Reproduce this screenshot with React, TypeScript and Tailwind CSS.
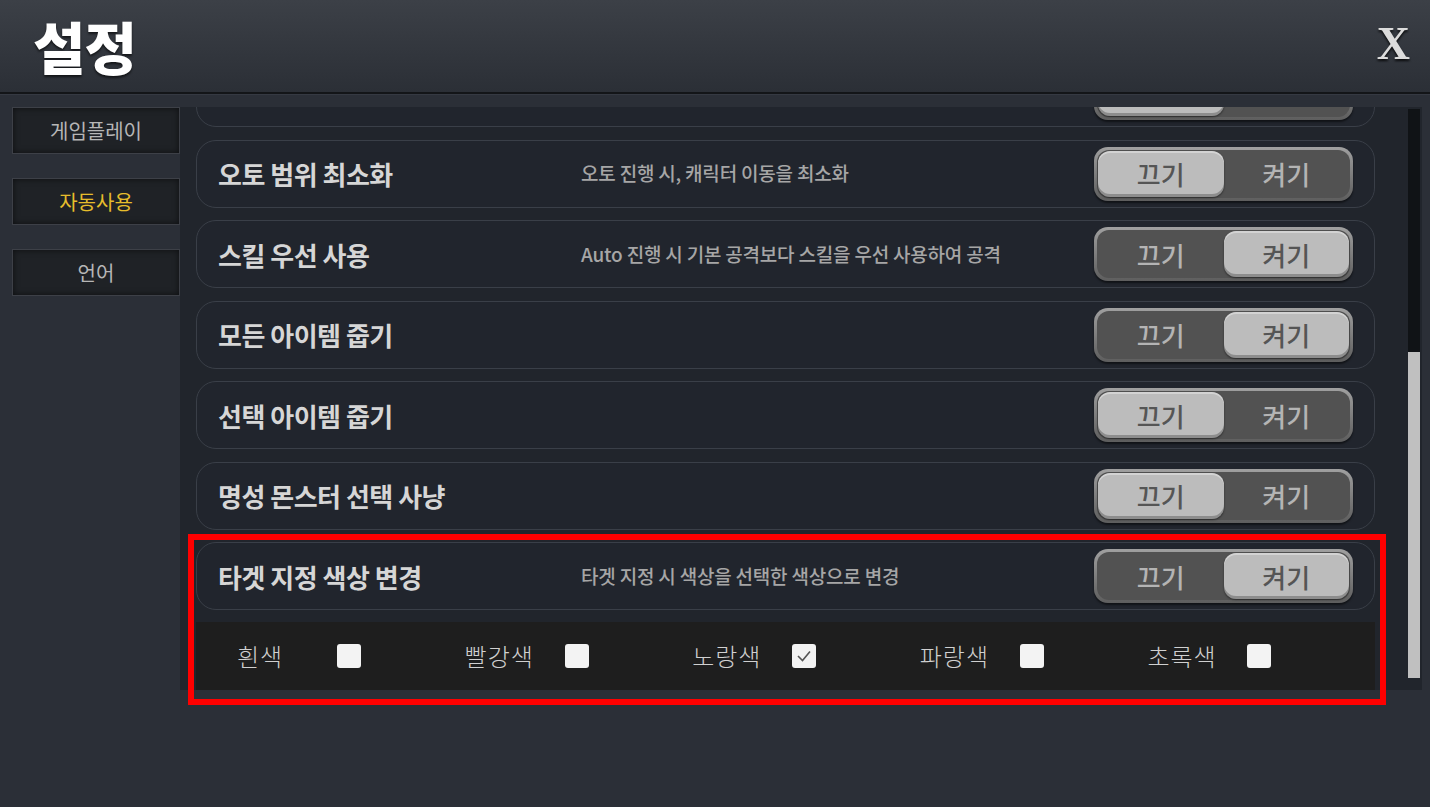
import React from "react";

const font = { fontFamily: '"Noto Sans CJK KR", "Noto Sans", sans-serif' };

type Row = { title: string; desc?: string; on: boolean; hidden?: boolean };

const rows: Row[] = [
  { title: "", desc: "", on: false, hidden: true },
  { title: "오토 범위 최소화", desc: "오토 진행 시, 캐릭터 이동을 최소화", on: false },
  { title: "스킬 우선 사용", desc: "Auto 진행 시 기본 공격보다 스킬을 우선 사용하여 공격", on: true },
  { title: "모든 아이템 줍기", on: true },
  { title: "선택 아이템 줍기", on: false },
  { title: "명성 몬스터 선택 사냥", on: false },
  { title: "타겟 지정 색상 변경", desc: "타겟 지정 시 색상을 선택한 색상으로 변경", on: true },
];

function Toggle({ on, hidden }: { on: boolean; hidden?: boolean }) {
  const knob =
    "bg-[#bcbcbc] rounded-[12px] shadow-[inset_0_2px_0_rgba(255,255,255,0.35),inset_0_-3px_0_rgba(0,0,0,0.25),0_1px_2px_rgba(0,0,0,0.5)] text-[#555]";
  const plain = "text-[#b4b4b4]";
  return (
    <div className="w-[259px] h-[54px] rounded-[14px] p-[3px] bg-gradient-to-b from-[#a0a0a0] to-[#5e5e5e] shadow-[0_2px_2px_rgba(0,0,0,0.5)]">
      <div className="w-full h-full rounded-[12px] bg-[#525252] flex p-[1px]">
        <div
          className={`w-1/2 h-full flex items-center justify-center text-[26px] font-medium ${
            on ? plain : knob
          }`}
        >
          {hidden ? "" : "끄기"}
        </div>
        <div
          className={`w-1/2 h-full flex items-center justify-center text-[26px] font-medium ${
            on ? knob : plain
          }`}
        >
          {hidden ? "" : "켜기"}
        </div>
      </div>
    </div>
  );
}

function SettingRow({ row }: { row: Row }) {
  return (
    <div className="h-[68px] shrink-0 rounded-[20px] border border-[#3a3f48] bg-[#21252d] flex items-center pl-[21px] pr-[21px]">
      <div className="w-[363px] shrink-0 text-[26px] font-bold text-[#d6d6d6] tracking-[-0.5px]">
        {row.title}
      </div>
      <div className="flex-1 text-[19px] font-medium text-[#a6a6a6] tracking-[-0.2px]">{row.desc}</div>
      <Toggle on={row.on} hidden={row.hidden} />
    </div>
  );
}

const colors = [
  { name: "흰색", checked: false },
  { name: "빨강색", checked: false },
  { name: "노랑색", checked: true },
  { name: "파랑색", checked: false },
  { name: "초록색", checked: false },
];

function Tab({ label, active }: { label: string; active?: boolean }) {
  return (
    <div
      className={`h-[47px] border-t border-b border-[#3d4047] border-l border-r bg-[#1f2226] shadow-[inset_0_0_6px_rgba(0,0,0,0.6)] flex items-center justify-center text-[20px] ${
        active ? "text-[#e6bd2c]" : "text-[#b6b6b6]"
      }`}
    >
      {label}
    </div>
  );
}

export default function App() {
  return (
    <div
      className="w-[1430px] h-[807px] bg-[#2b2f37] flex flex-col relative overflow-hidden"
      style={font}
    >
      <header className="h-[94px] shrink-0 bg-gradient-to-b from-[#3c4047] to-[#2b2f36] border-b-2 border-[#131518] flex items-center justify-between pl-[33px] pr-[20px]">
        <div className="text-[57px] font-black text-white leading-none tracking-[-1px] drop-shadow-[0_2px_1px_rgba(0,0,0,0.6)] pb-[2px]">
          설정
        </div>
        <div
          className="text-[46px] font-bold text-[#dcdcdc] leading-none drop-shadow-[0_2px_1px_rgba(0,0,0,0.8)] pb-[4px]"
          style={{ fontFamily: '"Liberation Serif", serif' }}
        >
          X
        </div>
      </header>
      <div className="border-t border-[#353942]" />
      <div className="flex pt-[12px]">
        <div className="w-[168px] ml-[12px] shrink-0 flex flex-col gap-[24px]">
          <Tab label="게임플레이" />
          <Tab label="자동사용" active />
          <Tab label="언어" />
        </div>
        <div className="w-[1242px] h-[583px] bg-[#21252c] flex">
          <div className="w-[1179px] ml-[16px] overflow-hidden">
            <div className="flex flex-col gap-[12.5px] -mt-[48px]">
              {rows.map((r, i) => (
                <SettingRow key={i} row={r} />
              ))}
              <div className="h-[68px] shrink-0 -mt-[0.5px] bg-[#1e1e1e] flex items-center pl-[41px]">
                {colors.map((c) => (
                  <div key={c.name} className="w-[230px] flex items-center">
                    <div className="w-[100px] text-[24px] font-light text-[#d0d0d0] tracking-[1px]">{c.name}</div>
                    <div className="w-[24px] h-[24px] rounded-[3px] bg-[#f3f3f3] flex items-center justify-center">
                      {c.checked && (
                        <svg width="16" height="14" viewBox="0 0 16 14">
                          <path d="M2 7 L6.5 11.5 L14 2.5" fill="none" stroke="#555" strokeWidth="1.6" />
                        </svg>
                      )}
                    </div>
                  </div>
                ))}
              </div>
            </div>
          </div>
          <div className="w-[12px] ml-[33px] mt-[2px] h-[569px] bg-[#101316] flex flex-col">
            <div className="mt-[243px] h-[326px] bg-[#c0c0c0]" />
          </div>
        </div>
      </div>
      <div className="absolute left-[188px] top-[534px] w-[1198px] h-[171px] border-[6px] border-[#ff0000] pointer-events-none" />
    </div>
  );
}
